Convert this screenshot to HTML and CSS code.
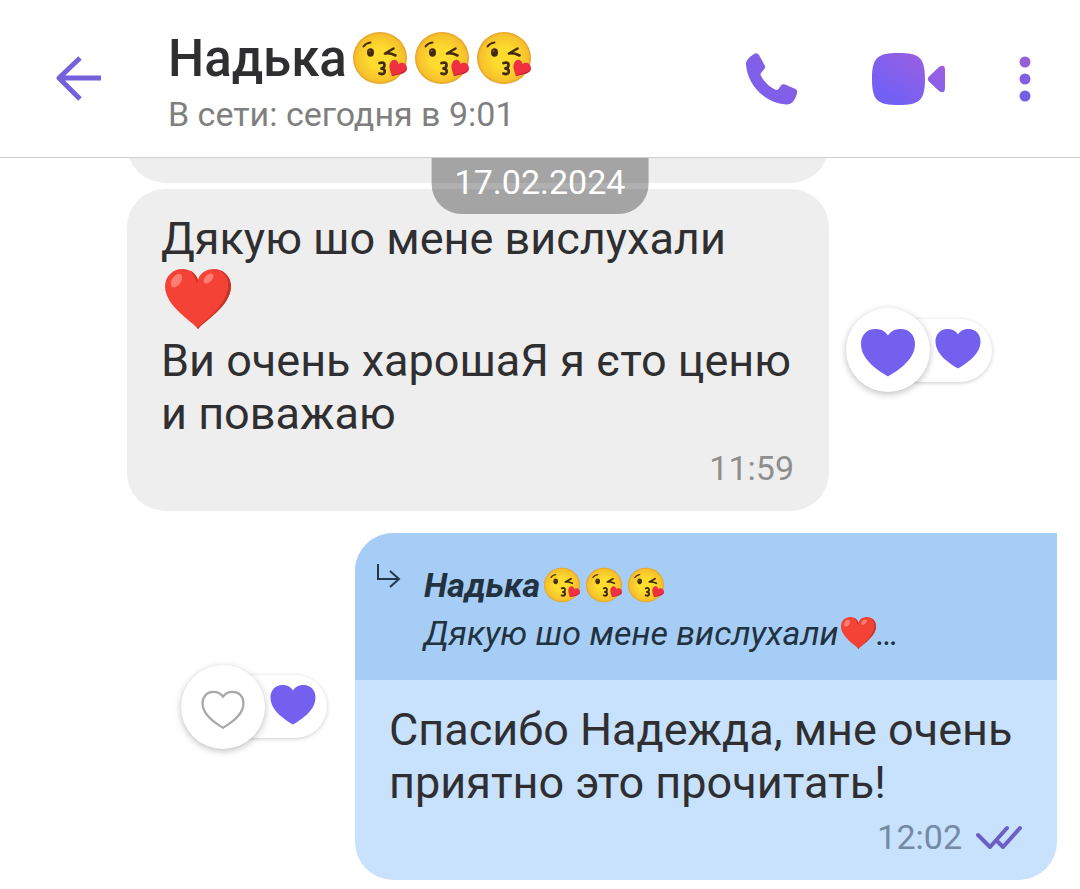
FILE: index.html
```html
<!DOCTYPE html>
<html lang="ru">
<head>
    <meta charset="UTF-8">
    <meta name="viewport" content="width=device-width, initial-scale=1.0">
    <title>Надька</title>
    <link rel="stylesheet" href="styles.css">
</head>
<body>

    <!-- Shared shapes -->
    <svg class="sprite" aria-hidden="true">
        <defs>
            <linearGradient id="violet" x1="0" y1="1" x2="1" y2="0">
                <stop offset="0.2" stop-color="#7360f5"/>
                <stop offset="1" stop-color="#a35fdc"/>
            </linearGradient>
            <linearGradient id="violetSoft" x1="0" y1="1" x2="1" y2="0">
                <stop offset="0" stop-color="#7a5fee"/>
                <stop offset="1" stop-color="#8a5fe0"/>
            </linearGradient>
            <radialGradient id="face" cx="0.5" cy="0.5" r="0.5">
                <stop offset="0.4" stop-color="#fddc2e"/>
                <stop offset="0.9" stop-color="#f7c02b"/>
                <stop offset="1" stop-color="#e3a02c"/>
            </radialGradient>
        </defs>
        <symbol id="kiss" viewBox="0 0 54 52">
            <ellipse cx="27" cy="26" rx="27" ry="26" fill="url(#face)"/>
            <path d="M10.500 14.500Q13 11 17.500 10.500" fill="none" stroke="#4a2a0c" stroke-width="2" stroke-linecap="round"/>
            <ellipse cx="17.500" cy="20.500" rx="3.500" ry="4.200" fill="#422b0d"/>
            <circle cx="16.500" cy="19" r="1" fill="#896024"/>
            <path d="M40.500 16.500L32 21.500Q37 20.500 42.500 23.500" fill="none" stroke="#422b0d" stroke-width="2.600" stroke-linecap="round" stroke-linejoin="round"/>
            <path d="M26.500 31Q31.500 29.500 31.500 33Q31.500 36 28.500 36.500Q32.500 37 31.500 40.500Q30.500 43 26.500 41.500" fill="none" stroke="#422b0d" stroke-width="2.800" stroke-linecap="round" stroke-linejoin="round"/>
            <path d="M39 44C36.500 37 35.500 34 37.500 30.500C39.500 26.500 44.500 27 45.500 32C49 29 54 31.500 54 36C54 41 48 42 39 44Z" fill="#ee3040"/>
            <path d="M39 44C48 42 54 41 54 36C52 40.500 46 41.500 38.500 43Z" fill="#c62030"/>
        </symbol>
        <symbol id="redHeart" viewBox="0 0 66 60">
            <path d="M33 60C27 52 1 38 0 18C0 7 8 0 17 0C25 0 31 4 33 11C35 4 41 0 49 0C58 0 66 7 66 18C65 38 39 52 33 60Z" fill="#f44336"/>
            <path d="M54 1C60 4 64 10 63 18C61 37 41 51 32 59L33 60C39 52 65 38 66 18C66 9 61 3 54 1Z" fill="#c33529"/>
            <path d="M33 11C31 6 28 3 25 1Q30 7 32 15Z" fill="#c33529"/>
            <ellipse cx="11.500" cy="11.500" rx="4.500" ry="7.500" transform="rotate(35 11.500 11.500)" fill="#ff7e70"/>
            <ellipse cx="43.500" cy="9.500" rx="3.500" ry="6" transform="rotate(45 43.500 9.500)" fill="#ff7e70"/>
        </symbol>
        <symbol id="heart" viewBox="0 0 54 48">
            <path d="M27 47.500C20 43 0 32 0 15C0 6 6 0 14 0C20 0 24 2 27 6.500C30 2 34 0 40 0C48 0 54 6 54 15C54 32 34 43 27 47.500Z"/>
        </symbol>
    </svg>

    <!-- Chat header -->
    <header class="chat-header">
        <button class="icon-button" aria-label="Назад">
            <svg width="45" height="45" viewBox="0 0 45 45" fill="none" stroke="#7561dc" stroke-width="5" stroke-linejoin="round">
                <path d="M45 22H4M24 2L3 22L24 43"/>
            </svg>
        </button>
        <div class="contact">
            <h1>Надька<svg class="emoji" role="img" aria-label="😘"><use href="#kiss"/></svg><svg class="emoji" role="img" aria-label="😘"><use href="#kiss"/></svg><svg class="emoji" role="img" aria-label="😘"><use href="#kiss"/></svg></h1>
            <p class="status">В сети: сегодня в 9:01</p>
        </div>
        <nav class="actions">
            <button class="icon-button" aria-label="Позвонить">
                <svg width="52" height="52" viewBox="0 0 52 52" fill="url(#violetSoft)">
                    <path d="M8 1Q11 -1 13 2L18.500 12Q20 15 17.500 17L15 20Q14 21.500 15 23Q20 32 29 36.500Q31 37.500 32.500 36L35 32.500Q36.500 30.500 39 31.500L49.500 36Q52 37.500 51 40.500Q48 52 40 51.500C18 50 1 31 0 11Q0 6 8 1Z"/>
                </svg>
            </button>
            <button class="icon-button" aria-label="Видеозвонок">
                <svg width="73" height="52" viewBox="0 0 73 52" fill="url(#violet)">
                    <path d="M26.500 0C47 0 53 4 53 26C53 48 47 52 26.500 52C6 52 0 48 0 26C0 4 6 0 26.500 0ZM57 23.500L67 14Q73 10.500 73 17V35Q73 41.500 67 38L57 28.500Q54.500 26 57 23.500Z"/>
                </svg>
            </button>
            <button class="icon-button" aria-label="Меню">
                <svg width="12" height="46" viewBox="0 0 12 46">
                    <circle cx="6" cy="6" r="5.500" fill="#955fd8"/>
                    <circle cx="6" cy="23" r="5.500" fill="#8060e2"/>
                    <circle cx="6" cy="40" r="5.500" fill="#7060e6"/>
                </svg>
            </button>
        </nav>
    </header>

    <!-- Messages -->
    <main class="chat">
        <time class="date-badge" datetime="2024-02-17">17.02.2024</time>

        <div class="row incoming">
            <div class="bubble previous"></div>
        </div>

        <div class="row incoming">
            <article class="bubble">
                <div class="content">
                    <p>Дякую шо мене вислухали</p>
                    <svg class="big-heart" role="img" aria-label="❤️"><use href="#redHeart"/></svg>
                    <p>Ви очень харошаЯ я єто ценю и поважаю</p>
                    <div class="meta"><time>11:59</time></div>
                </div>
            </article>
            <div class="reactions">
                <button class="like" aria-label="Нравится"><svg class="heart-big"><use href="#heart"/></svg></button>
                <span class="count"><svg class="heart-small"><use href="#heart"/></svg></span>
            </div>
        </div>

        <div class="row outgoing">
            <div class="reactions">
                <button class="like" aria-label="Нравится">
                    <svg width="44" height="40" viewBox="-2 -2 58 52" fill="none" stroke="#a9a9a9" stroke-width="3">
                        <path d="M27 47.500C20 43 0 32 0 15C0 6 6 0 14 0C20 0 24 2 27 6.500C30 2 34 0 40 0C48 0 54 6 54 15C54 32 34 43 27 47.500Z"/>
                    </svg>
                </button>
                <span class="count"><svg class="heart-small"><use href="#heart"/></svg></span>
            </div>
            <article class="bubble">
                <blockquote class="quote">
                    <svg class="reply-arrow" width="24" height="24" viewBox="0 0 24 24" fill="none" stroke="#22384d" stroke-width="2">
                        <path d="M1 0V15H22M13 7L22 15L13 23"/>
                    </svg>
                    <div class="quote-text">
                        <p class="quote-name">Надька<svg class="emoji" role="img" aria-label="😘"><use href="#kiss"/></svg><svg class="emoji" role="img" aria-label="😘"><use href="#kiss"/></svg><svg class="emoji" role="img" aria-label="😘"><use href="#kiss"/></svg></p>
                        <p class="quote-body">Дякую шо мене вислухали<svg class="small-heart" role="img" aria-label="❤️"><use href="#redHeart"/></svg>…</p>
                    </div>
                </blockquote>
                <div class="content">
                    <p>Спасибо Надежда, мне очень приятно это прочитать!</p>
                    <div class="meta">
                        <time>12:02</time>
                        <svg width="46" height="24" viewBox="0 0 46 24" fill="none" stroke="#6a5fc6" stroke-width="4" stroke-linecap="round" stroke-linejoin="round">
                            <path d="M2 10L14 22L31 3M22 17L27 22L44 3"/>
                        </svg>
                    </div>
                </div>
            </article>
        </div>
    </main>

</body>
</html>
```

FILE: styles.css
```css
/* General */
* {
    box-sizing: border-box;
}

body {
    margin: 0;
    background-color: #ffffff;
    color: #2f2f31;
    font-family: Roboto, "Noto Sans", sans-serif;
}

h1, p, blockquote {
    margin: 0;
}

.sprite {
    position: absolute;
    width: 0;
    height: 0;
}

/* Header */
.chat-header {
    display: flex;
    align-items: center;
    height: 158px;
    padding: 0 49px 0 56px;
    border-bottom: 1px solid #cfcfcf;
}

.icon-button {
    display: flex;
    padding: 0;
    border: none;
    background: none;
    cursor: pointer;
}

.contact {
    flex: 1;
    margin-left: 67px;
    padding-bottom: 22px;
    padding-top: 28px;
}

h1 {
    font-size: 51px;
    font-weight: 500;
    line-height: 60px;
    white-space: nowrap;
}

h1 .emoji {
    width: 54px;
    height: 52px;
    margin: 0 2px 0 6px;
    vertical-align: -8px;
}

.status {
    margin-top: 5px;
    font-size: 34px;
    line-height: 40px;
    color: #7f7f7f;
}

.actions {
    display: flex;
    align-items: center;
    gap: 74px;
}

/* Message list */
.chat {
    position: relative;
    overflow: hidden;
}

.date-badge {
    position: absolute;
    top: 0;
    left: 50%;
    transform: translateX(-50%);
    padding: 4px 23px 12px;
    border-radius: 0 0 30px 30px;
    background-color: rgba(0, 0, 0, 0.31);
    color: #ffffff;
    font-size: 34px;
    line-height: 40px;
}

.row {
    display: flex;
    align-items: center;
}

.incoming {
    gap: 17px;
    margin-bottom: 6px;
    padding-left: 127px;
}

.outgoing {
    justify-content: flex-end;
    gap: 28px;
    margin-top: 22px;
    padding-right: 23px;
}

.bubble {
    width: 65vw;
    border-radius: 38px;
    background-color: #eeeeee;
    overflow: hidden;
}

/* Scrolled up under the header */
.previous {
    height: 80px;
    margin-top: -55px;
}

.outgoing .bubble {
    border-top-right-radius: 0;
    background-color: #c8e1fc;
}

.content {
    padding: 23px 35px 23px 34px;
    font-size: 45px;
    line-height: 53px;
}

.big-heart {
    display: block;
    width: 66px;
    height: 60px;
    margin: 4px 4px 5px;
}

.meta {
    display: flex;
    justify-content: flex-end;
    align-items: center;
    gap: 14px;
    margin-top: 8px;
    font-size: 34px;
    line-height: 40px;
    color: #8e8e8e;
}

.outgoing .meta {
    color: #748ba3;
}

/* Quoted message */
.quote {
    display: flex;
    gap: 23px;
    padding: 28px 22px 23px;
    background-color: #a6cdf6;
    color: #22323f;
    font-size: 34px;
    font-style: italic;
    line-height: 48px;
}

.reply-arrow {
    margin-top: 3px;
}

.quote-name {
    font-weight: 700;
}

.quote-name .emoji {
    width: 36px;
    height: 36px;
    margin: 0 2px 0 4px;
    vertical-align: -6px;
}

.small-heart {
    width: 35px;
    height: 32px;
    margin: 0 1px 0 2px;
    vertical-align: -4px;
}

/* Reactions */
.reactions {
    display: flex;
    align-items: center;
}

.like {
    display: flex;
    align-items: center;
    justify-content: center;
    z-index: 1;
    width: 84px;
    height: 84px;
    padding: 6px 0 0;
    border: none;
    border-radius: 50%;
    background-color: #ffffff;
    box-shadow: 0 2px 7px rgba(0, 0, 0, 0.26);
    cursor: pointer;
}

.count {
    display: flex;
    justify-content: flex-end;
    width: 104px;
    height: 63px;
    margin-left: -42px;
    padding: 10px 11px;
    border-radius: 32px;
    background-color: #ffffff;
    box-shadow: 0 1px 4px rgba(0, 0, 0, 0.2);
}

.heart-big {
    width: 54px;
    height: 48px;
    fill: #7360ef;
}

.heart-small {
    width: 46px;
    height: 40px;
    fill: #7360ef;
}
```
